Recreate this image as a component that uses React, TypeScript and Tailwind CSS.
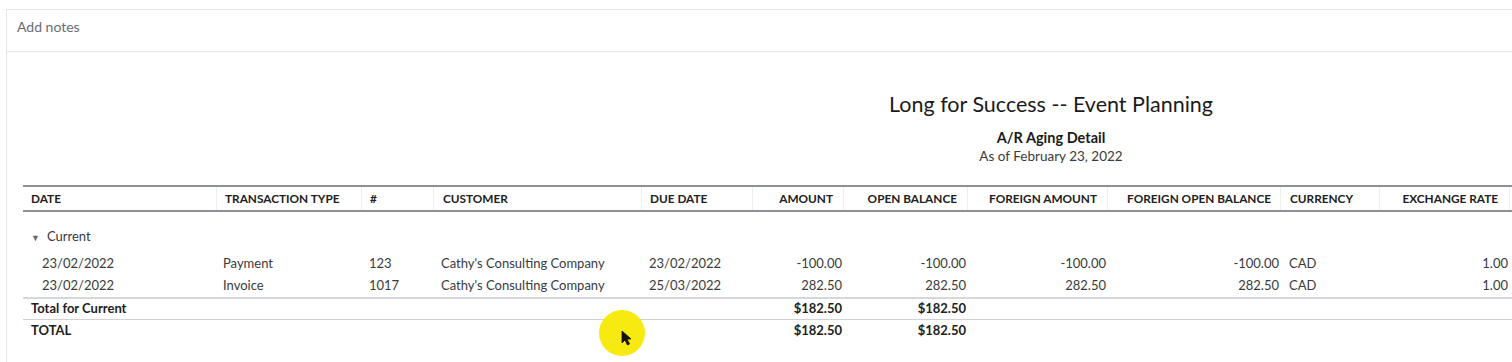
import React from 'react'

const cols =
  'grid grid-cols-[193px_145px_72px_208px_111px_91px_124px_140px_173px_99px_130px_1fr]'

// header cells: label + alignment + padding
const headers: { label: string; cls: string }[] = [
  { label: 'DATE', cls: 'pl-[8px]' },
  { label: 'TRANSACTION TYPE', cls: 'pl-[8px] border-l' },
  { label: '#', cls: 'pl-[8px] border-l' },
  { label: 'CUSTOMER', cls: 'pl-[9px] border-l' },
  { label: 'DUE DATE', cls: 'pl-[8px] border-l' },
  { label: 'AMOUNT', cls: 'pr-[10px] text-right border-l' },
  { label: 'OPEN BALANCE', cls: 'pr-[10px] text-right border-l' },
  { label: 'FOREIGN AMOUNT', cls: 'pr-[10px] text-right border-l' },
  { label: 'FOREIGN OPEN BALANCE', cls: 'pr-[9px] text-right border-l' },
  { label: 'CURRENCY', cls: 'pl-[9px] border-l' },
  { label: 'EXCHANGE RATE', cls: 'pr-[11px] text-right border-l' },
  { label: '', cls: 'border-l' },
]

const rows = [
  ['23/02/2022', 'Payment', '123', "Cathy's Consulting Company", '23/02/2022', '-100.00', '-100.00', '-100.00', '-100.00', 'CAD', '1.00'],
  ['23/02/2022', 'Invoice', '1017', "Cathy's Consulting Company", '25/03/2022', '282.50', '282.50', '282.50', '282.50', 'CAD', '1.00'],
]

function DataRow({ r }: { r: string[] }) {
  return (
    <div className={`${cols} h-[22px] items-center text-[13px] text-[#393a3d]`}>
      <div className="pl-[19px]">{r[0]}</div>
      <div className="pl-[7px]">{r[1]}</div>
      <div className="pl-[8px]">{r[2]}</div>
      <div className="pl-[8px] whitespace-nowrap">{r[3]}</div>
      <div className="pl-[8px]">{r[4]}</div>
      <div className="pr-[1px] text-right">{r[5]}</div>
      <div className="pr-[1px] text-right">{r[6]}</div>
      <div className="pr-[1px] text-right">{r[7]}</div>
      <div className="pr-[1px] text-right">{r[8]}</div>
      <div className="pl-[9px]">{r[9]}</div>
      <div className="pr-[1px] text-right">{r[10]}</div>
      <div />
    </div>
  )
}

function TotalRow({ label, border }: { label: string; border: boolean }) {
  return (
    <div
      className={`${cols} h-[21px] items-center text-[13px] font-bold text-[#212121] ${
        border ? 'border-b-[1.5px] border-[#cfd1d4]' : ''
      }`}
    >
      <div className="pl-[8px] whitespace-nowrap">{label}</div>
      <div />
      <div />
      <div />
      <div />
      <div className="pr-[1px] text-right">$182.50</div>
      <div className="pr-[1px] text-right">$182.50</div>
      <div />
      <div />
      <div />
      <div />
      <div />
    </div>
  )
}

export default function App() {
  return (
    <div className="relative w-[1512px] h-[362px] overflow-hidden bg-white font-['Lato',sans-serif]">
      <div className="ml-[6px] mt-[9px] h-[400px] border-l border-t border-[#e4e6e9]">
        {/* notes */}
        <div className="h-[42px] pt-[8px] pl-[10px] border-b border-[#e4e6e9] text-[14px] leading-[18px] text-[#6b6c72]">
          Add notes
        </div>

        {/* report */}
        <div className="pl-[16px] pt-[37px] w-[2072px]">
          <div className="text-center">
            <div className="text-[21.5px] leading-[30px] font-normal text-[#1a1a1a]">
              Long for Success -- Event Planning
            </div>
            <div className="mt-[10px] text-[14.5px] leading-[18px] font-bold text-[#1a1a1a]">A/R Aging Detail</div>
            <div className="text-[13.5px] leading-[18px] text-[#393a3d]">As of February 23, 2022</div>
          </div>

          <div className="mt-[20px]">
            {/* header */}
            <div className={`${cols} h-[27px] border-y-2 border-[#8d9096] text-[11.8px] font-bold text-[#212121]`}>
              {headers.map((h, i) => (
                <div key={i} className={`flex items-center border-[#eceef0] whitespace-nowrap ${h.cls} ${h.cls.includes('text-right') ? 'justify-end' : ''}`}>
                  {h.label}
                </div>
              ))}
            </div>

            {/* group */}
            <div className="h-[41px] pt-[15px] flex items-start pl-[8px] text-[13px] text-[#393a3d]">
              <span className="text-[9px] text-[#6b6c72] mr-[7px] mt-[4px]">▼</span>
              Current
            </div>

            {rows.map((r, i) => (
              <DataRow key={i} r={r} />
            ))}
            <div className="h-[2px] bg-[#d4d7dc]" />

            <TotalRow label="Total for Current" border />
            <TotalRow label="TOTAL" border={false} />
          </div>
        </div>
      </div>

      {/* screen recording cursor highlight */}
      <div className="absolute left-[599px] top-[310px] w-[46px] h-[46px] rounded-full bg-[#f6ea10]" />
      <svg className="absolute left-[621px] top-[330px]" width="11" height="16" viewBox="0 0 11 16">
        <path d="M1 1 L1 13 L4 10 L6.5 15 L8.5 14 L6 9 L10 9 Z" fill="#111" stroke="#111" strokeWidth="0.8" strokeLinejoin="round" />
      </svg>
    </div>
  )
}
